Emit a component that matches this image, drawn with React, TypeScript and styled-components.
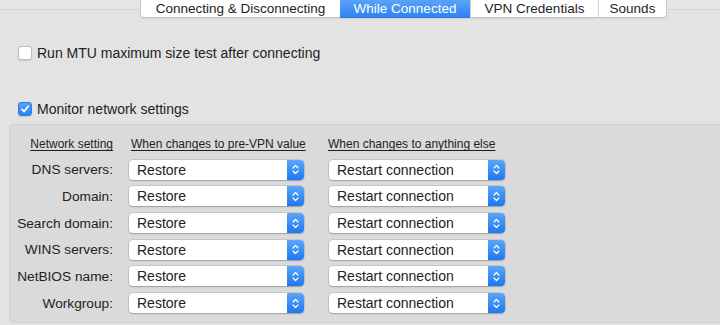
import React from "react";
import styled, { createGlobalStyle } from "styled-components";

const GlobalStyle = createGlobalStyle`
  html, body { margin: 0; padding: 0; }
  body {
    background: #e3e3e3;
    font-family: "Liberation Sans", Arial, sans-serif;
    color: #262626;
    -webkit-font-smoothing: antialiased;
  }
`;

const Page = styled.div`
  width: 720px;
  height: 325px;
  overflow: hidden;
  background: #e3e3e3;
`;

const TabStrip = styled.div`
  height: 9px;
  background: #e6e6e6;
  border-bottom: 1px solid #d3d3d3;
`;

const TabBar = styled.div`
  display: flex;
  padding-left: 140px;
  margin-top: -14px;
  height: 22px;
`;

const Tab = styled.div<{ $w: number; $active?: boolean; $first?: boolean; $last?: boolean }>`
  width: ${(p) => p.$w}px;
  height: 22px;
  box-sizing: border-box;
  display: flex;
  align-items: center;
  justify-content: center;
  padding-top: 4px;
  font-size: 13.5px;
  color: ${(p) => (p.$active ? "#ffffff" : "#1e1e1e")};
  background: ${(p) =>
    p.$active ? "linear-gradient(#64a9f8, #2f84f3)" : "#ffffff"};
  border-bottom: 1px solid ${(p) => (p.$active ? "#2a78e6" : "#c3c3c3")};
  border-left: ${(p) => (p.$first ? "1px solid #c8c8c8" : p.$active ? "none" : "1px solid #d2d2d2")};
  border-right: ${(p) => (p.$last ? "1px solid #c8c8c8" : "none")};
  border-bottom-left-radius: ${(p) => (p.$first ? "4px" : "0")};
  border-bottom-right-radius: ${(p) => (p.$last ? "4px" : "0")};
  box-shadow: 0 1px 1px rgba(0, 0, 0, 0.06);
  white-space: nowrap;
`;

const Content = styled.div`
  padding: 14px 0 0 18px;
`;

const CheckRow = styled.label<{ $mt: number }>`
  display: flex;
  align-items: center;
  gap: 5px;
  margin-top: ${(p) => p.$mt}px;
  font-size: 14px;
  height: 14px;
  color: #222222;
`;

const Box = styled.span<{ $checked?: boolean }>`
  width: 14px;
  height: 14px;
  box-sizing: border-box;
  border-radius: 3px;
  display: flex;
  align-items: center;
  justify-content: center;
  background: ${(p) => (p.$checked ? "linear-gradient(#56a3f8, #2b82f3)" : "#ffffff")};
  border: 1px solid ${(p) => (p.$checked ? "#2b7ce8" : "#bdbdbd")};
  box-shadow: 0 0.5px 1px rgba(0, 0, 0, 0.12);
`;

const GroupBox = styled.div`
  margin: 8px 0 0 9px;
  width: 720px;
  height: 199px;
  box-sizing: border-box;
  background: #dadada;
  border: 1px solid #d2d2d2;
  border-radius: 4px;
  padding: 13px 0 0 3px;
`;

const Grid = styled.div`
  display: grid;
  grid-template-columns: 100px 191px 201px;
  row-gap: 6.7px;
  align-items: center;
`;

const HeaderCell = styled.div<{ $ml: number; $right?: boolean }>`
  font-size: 12px;
  text-decoration: underline;
  text-underline-offset: 2px;
  color: #1e1e1e;
  margin-left: ${(p) => p.$ml}px;
  text-align: ${(p) => (p.$right ? "right" : "left")};
  white-space: nowrap;
  height: 13px;
  line-height: 13px;
  margin-bottom: 2px;
`;

const RowLabel = styled.div`
  font-size: 13.7px;
  text-align: right;
  white-space: nowrap;
  color: #222222;
`;

const Popup = styled.div<{ $ml: number }>`
  margin-left: ${(p) => p.$ml}px;
  height: 20px;
  display: flex;
  border-radius: 4px;
  background: #ffffff;
  box-shadow: 0 0 0 0.5px rgba(0, 0, 0, 0.18), 0 1px 1.5px rgba(0, 0, 0, 0.2);
  overflow: hidden;
`;

const PopupText = styled.div`
  flex: 1;
  font-size: 14px;
  line-height: 20px;
  padding-left: 8px;
  color: #222222;
  white-space: nowrap;
`;

const PopupArrow = styled.div`
  width: 17px;
  display: flex;
  align-items: center;
  justify-content: center;
  background: linear-gradient(#5aa6f8, #1d78f1);
`;

const Chevrons = () => (
  <svg width="7" height="11" viewBox="0 0 7 11">
    <path d="M1 4 L3.5 1.5 L6 4 M1 7 L3.5 9.5 L6 7" fill="none" stroke="#fff" strokeWidth="1.2" strokeLinecap="round" strokeLinejoin="round" />
  </svg>
);

const Check = () => (
  <svg width="10" height="10" viewBox="0 0 10 10">
    <path d="M2 5.3 L4.2 7.6 L8.2 2.3" fill="none" stroke="#fff" strokeWidth="1.7" strokeLinecap="round" strokeLinejoin="round" />
  </svg>
);

const rows = ["DNS servers:", "Domain:", "Search domain:", "WINS servers:", "NetBIOS name:", "Workgroup:"];

export default function App() {
  return (
    <>
      <GlobalStyle />
      <Page>
        <TabStrip />
        <TabBar>
          <Tab $w={200} $first>Connecting &amp; Disconnecting</Tab>
          <Tab $w={130} $active>While Connected</Tab>
          <Tab $w={128}>VPN Credentials</Tab>
          <Tab $w={69} $last>Sounds</Tab>
        </TabBar>
        <Content>
          <CheckRow $mt={14}>
            <Box />
            Run MTU maximum size test after connecting
          </CheckRow>
          <CheckRow $mt={42}>
            <Box $checked>
              <Check />
            </Box>
            Monitor network settings
          </CheckRow>
        </Content>
        <GroupBox>
          <Grid>
            <HeaderCell $ml={0} $right>Network setting</HeaderCell>
            <HeaderCell $ml={18}>When changes to pre-VPN value</HeaderCell>
            <HeaderCell $ml={24}>When changes to anything else</HeaderCell>
            {rows.map((r) => (
              <React.Fragment key={r}>
                <RowLabel>{r}</RowLabel>
                <Popup $ml={16}>
                  <PopupText>Restore</PopupText>
                  <PopupArrow>
                    <Chevrons />
                  </PopupArrow>
                </Popup>
                <Popup $ml={25}>
                  <PopupText>Restart connection</PopupText>
                  <PopupArrow>
                    <Chevrons />
                  </PopupArrow>
                </Popup>
              </React.Fragment>
            ))}
          </Grid>
        </GroupBox>
      </Page>
    </>
  );
}
